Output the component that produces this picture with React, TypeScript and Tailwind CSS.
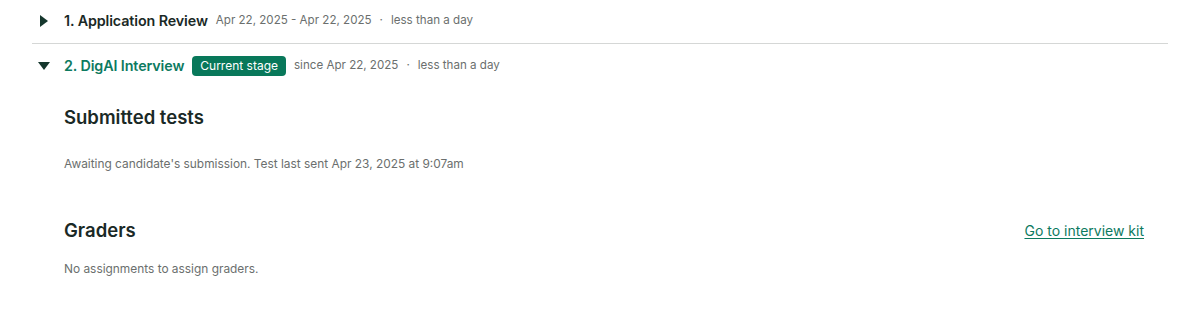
import { useState } from 'react';

interface StageRowProps {
  index: number;
  name: string;
  dates: string;
  duration: string;
  current?: boolean;
  open?: boolean;
  onToggle: () => void;
}

function StageRow({ index, name, dates, duration, current, open, onToggle }: StageRowProps) {
  return (
    <button
      type="button"
      onClick={onToggle}
      className="flex items-center w-full text-left h-[40px]"
    >
      <span className="w-[32px] flex items-center">
        {open ? (
          <svg className="w-[12px] h-[8px] ml-[6px]" viewBox="0 0 12 8">
            <path d="M0 0h12L6 8z" fill="#15372d" />
          </svg>
        ) : (
          <svg className="w-[8px] h-[12px] ml-[8px]" viewBox="0 0 8 12">
            <path d="M0 0l8 6L0 12z" fill="#15372d" />
          </svg>
        )}
      </span>
      <span
        className={`text-[14.3px] font-semibold tracking-[-0.1px] ${
          current ? 'text-[#0d7a5f]' : 'text-[#1a2926]'
        }`}
      >
        {index}. {name}
      </span>
      {current && (
        <span className="ml-[8px] px-[8px] h-[20px] flex items-center rounded-[4px] bg-[#08785a] text-white text-[12px]">
          Current stage
        </span>
      )}
      <span className="ml-[8px] text-[11.6px] text-[#6b6f6e]">{dates}</span>
      <span className="mx-[8px] text-[11.6px] text-[#6b6f6e]">·</span>
      <span className="text-[11.6px] text-[#6b6f6e]">{duration}</span>
    </button>
  );
}

export default function App() {
  const [openFirst, setOpenFirst] = useState(false);
  const [openSecond, setOpenSecond] = useState(true);

  return (
    <div className="bg-white w-[1194px] h-[325px] pl-[32px] pr-[26px] pt-[1px] font-['Inter',sans-serif]">
      <div className="border-b border-[#d5d7d6] pb-[2px]">
        <StageRow
          index={1}
          name="Application Review"
          dates="Apr 22, 2025 - Apr 22, 2025"
          duration="less than a day"
          open={openFirst}
          onToggle={() => setOpenFirst(!openFirst)}
        />
      </div>
      <div className="pt-[2px]">
        <StageRow
          index={2}
          name="DigAI Interview"
          dates="since Apr 22, 2025"
          duration="less than a day"
          current
          open={openSecond}
          onToggle={() => setOpenSecond(!openSecond)}
        />
        {openSecond && (
          <div className="pl-[32px] pr-[24px]">
            <h3 className="mt-[18px] text-[18.5px] font-semibold text-[#1a2926]">Submitted tests</h3>
            <p className="mt-[23px] text-[11.9px] text-[#6b6f6e]">
              Awaiting candidate's submission. Test last sent Apr 23, 2025 at 9:07am
            </p>
            <div className="mt-[44px] flex items-center justify-between">
              <h3 className="text-[18.5px] font-semibold text-[#1a2926]">Graders</h3>
              <a href="#" className="text-[14px] text-[#0d7a5f] underline underline-offset-2">
                Go to interview kit
              </a>
            </div>
            <p className="mt-[16px] text-[11.9px] text-[#6b6f6e]">No assignments to assign graders.</p>
          </div>
        )}
      </div>
    </div>
  );
}
